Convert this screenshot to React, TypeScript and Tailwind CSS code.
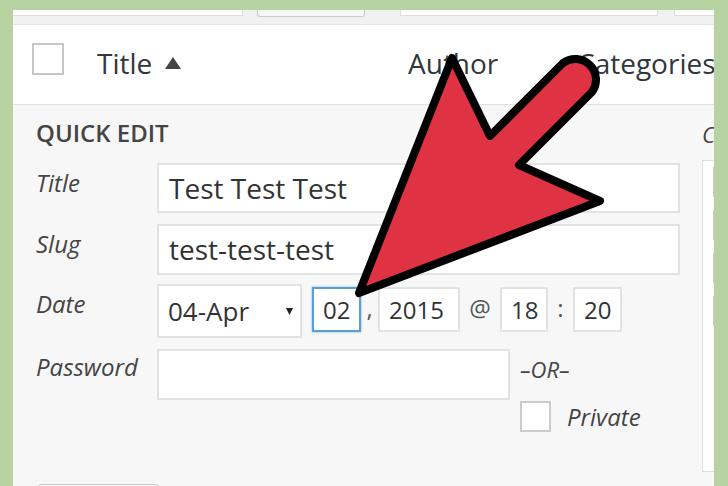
function TopBand() {
    return (
        <div className="flex h-[15px] shrink-0 flex-row items-start border-b border-[#e5e5e5] bg-[#f1f1f1]">
            <div className="h-[6px] w-[233px] border-b border-r border-[#dddddd] bg-white" />
            <div className="ml-[14px] h-[7px] w-[109px] rounded-b-[3px] border border-t-0 border-[#cccccc] bg-[#f7f7f7]" />
            <div className="ml-[35px] h-[6px] w-[262px] border-x border-b border-[#dddddd] bg-white" />
            <div className="ml-[16px] h-[6px] w-[40px] border-b border-l border-[#dddddd] bg-white" />
        </div>
    );
}

function Header() {
    return (
        <div className="flex h-[80px] shrink-0 flex-row items-start border-b border-[#e1e1e1] bg-white pl-[19px] text-[28px] leading-[38px] text-[#32373c]">
            <div className="mt-[18px] h-[32px] w-[32px] shrink-0 border-2 border-[#c6c6c6] bg-white" />
            <div className="ml-[33px] mt-[19px] flex w-[311px] shrink-0 flex-row items-center">
                <span>Title</span>
                <svg width="16" height="12" viewBox="0 0 16 12" className="ml-[13px]">
                    <polygon points="8,0 16,12 0,12" fill="#444444" />
                </svg>
            </div>
            <div className="mt-[19px] w-[169px] shrink-0">Author</div>
            <div className="mt-[19px] shrink-0 whitespace-nowrap">Categories</div>
        </div>
    );
}

function Label({ text, pad }: { text: string; pad: string }) {
    return (
        <div className={`w-[121px] shrink-0 text-[24px] italic leading-[32px] text-[#444444] ${pad}`}>
            {text}
        </div>
    );
}

function SmallBox({ value, width, focused }: { value: string; width: string; focused?: boolean }) {
    return (
        <div
            className={`mt-[3px] h-[45px] shrink-0 border-2 bg-white pl-[9px] text-[24px] leading-[41px] text-[#333333] ${width} ${
                focused ? 'border-[#5b9dd9] shadow-[0_0_2px_rgba(30,140,190,0.6)]' : 'border-[#e2e2e2]'
            }`}>
            {value}
        </div>
    );
}

function Sep({ text, width }: { text: string; width: string }) {
    return (
        <div className={`mt-[3px] shrink-0 text-center text-[24px] leading-[41px] text-[#555555] ${width}`}>
            {text}
        </div>
    );
}

function QuickEdit() {
    return (
        <div className="w-[689px] shrink-0 pl-[23px] pt-[12px]">
            <div className="h-[32px] text-[24px] font-semibold leading-[32px] text-[#444444]">QUICK EDIT</div>

            <div className="mt-[14px] flex flex-row">
                <Label text="Title" pad="pt-[4px]" />
                <div className="h-[50px] w-[523px] border-2 border-[#e2e2e2] bg-white pl-[10px] text-[28px] leading-[46px]">
                    Test Test Test
                </div>
            </div>

            <div className="mt-[11px] flex flex-row">
                <Label text="Slug" pad="pt-[4px]" />
                <div className="h-[51px] w-[523px] border-2 border-[#e2e2e2] bg-white pl-[10px] text-[28px] leading-[46px]">
                    test-test-test
                </div>
            </div>

            <div className="mt-[9px] flex flex-row items-start">
                <Label text="Date" pad="pt-[4px]" />
                <div className="flex h-[54px] w-[145px] shrink-0 flex-row items-center justify-between border-2 border-[#e2e2e2] bg-white pl-[9px] pr-[7px] text-[26px] leading-[50px]">
                    <span>04-Apr</span>
                    <svg width="7" height="7" viewBox="0 0 7 7">
                        <polygon points="0,0 7,0 3.5,7" fill="#222222" />
                    </svg>
                </div>
                <div className="w-[10px] shrink-0" />
                <SmallBox value="02" width="w-[49px]" focused />
                <Sep text="," width="w-[17px]" />
                <SmallBox value="2015" width="w-[82px]" />
                <Sep text="@" width="w-[40px]" />
                <SmallBox value="18" width="w-[48px]" />
                <Sep text=":" width="w-[25px]" />
                <SmallBox value="20" width="w-[49px]" />
            </div>

            <div className="mt-[11px] flex flex-row items-start">
                <Label text="Password" pad="pt-[2px]" />
                <div className="h-[51px] w-[353px] shrink-0 border-2 border-[#e2e2e2] bg-white" />
                <div className="ml-[10px] flex flex-col pt-[5px] text-[#444444]">
                    <div className="text-[22px] italic leading-[30px]">–OR–</div>
                    <div className="mt-[17px] flex flex-row items-center">
                        <div className="h-[31px] w-[31px] border-2 border-[#cccccc] bg-white" />
                        <span className="ml-[16px] text-[24px] italic leading-[31px]">Private</span>
                    </div>
                </div>
            </div>

            <div className="ml-[2px] mt-[52px] h-[30px] w-[121px] rounded-[3px] border border-[#cccccc] bg-[#f7f7f7]" />
        </div>
    );
}

function CategoryColumn() {
    return (
        <div className="shrink-0 pt-[14px]">
            <div className="whitespace-nowrap text-[22px] italic leading-[30px] text-[#444444]">Categories</div>
            <div className="mt-[11px] flex h-[312px] w-[200px] flex-col gap-[13px] border border-[#dddddd] bg-white pl-[10px] pt-[6px]">
                <div className="h-[30px] w-[30px] border-2 border-[#cccccc]" />
                <div className="h-[30px] w-[30px] border-2 border-[#cccccc]" />
                <div className="h-[30px] w-[30px] border-2 border-[#cccccc]" />
                <div className="h-[30px] w-[30px] border-2 border-[#cccccc]" />
            </div>
        </div>
    );
}

function Arrow() {
    return (
        <svg
            className="pointer-events-none absolute left-0 top-0"
            width="728"
            height="486"
            viewBox="0 0 728 486">
            <path
                d="M 359 293 L 452 58 L 490 136 L 563 63 A 20.75 20.75 0 0 1 592 92 L 519 165 L 600 201 Z"
                fill="#df3242"
                stroke="#000000"
                strokeWidth="8"
                strokeLinejoin="round"
            />
        </svg>
    );
}

export default function App() {
    return (
        <div className="relative h-[486px] w-[728px] overflow-hidden bg-[#b8d3a2] pl-[13px] pr-[14px] pt-[10px] font-['Open_Sans',sans-serif] text-[#333333]">
            <div className="flex h-[476px] w-[701px] flex-col overflow-hidden bg-[#f7f7f7]">
                <TopBand />
                <Header />
                <div className="flex flex-1 flex-row">
                    <QuickEdit />
                    <CategoryColumn />
                </div>
            </div>
            <Arrow />
        </div>
    );
}
